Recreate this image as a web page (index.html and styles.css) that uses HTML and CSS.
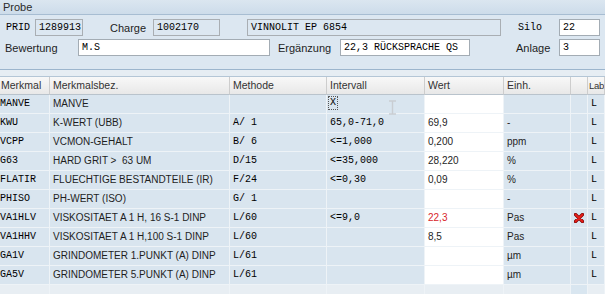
FILE: index.html
```html
<!DOCTYPE html>
<html lang="de">
<head>
    <meta charset="UTF-8">
    <title>Probe</title>
    <link rel="stylesheet" href="styles.css">
</head>
<body>
    <div class="titlebar">Probe</div>

    <div class="panel">
        <div class="form-row row-1">
            <span class="lbl mono lbl-prid">PRID</span>
            <span class="field ro mono f-prid">1289913</span>
            <span class="lbl lbl-charge">Charge</span>
            <span class="field ro mono f-charge">1002170</span>
            <span class="field ro mono f-text">VINNOLIT EP 6854</span>
            <span class="lbl mono lbl-silo">Silo</span>
            <span class="field mono f-small">22</span>
        </div>
        <div class="form-row row-2">
            <span class="lbl lbl-bew">Bewertung</span>
            <span class="field mono f-bew">M.S</span>
            <span class="lbl lbl-erg">Ergänzung</span>
            <span class="field mono f-erg">22,3 RÜCKSPRACHE QS</span>
            <span class="lbl lbl-anl">Anlage</span>
            <span class="field mono f-small">3</span>
        </div>
    </div>

    <div class="grid">
        <div class="row head">
            <div class="cell">Merkmal</div>
            <div class="cell">Merkmalsbez.</div>
            <div class="cell">Methode</div>
            <div class="cell">Intervall</div>
            <div class="cell">Wert</div>
            <div class="cell">Einh.</div>
            <div class="cell"></div>
            <div class="cell lab">Lab</div>
        </div>
        <div class="row">
            <div class="cell mono">MANVE</div>
            <div class="cell">MANVE</div>
            <div class="cell mono"></div>
            <div class="cell mono"><span class="check">X</span></div>
            <div class="cell val"></div>
            <div class="cell"></div>
            <div class="cell"></div>
            <div class="cell mono">L</div>
        </div>
        <div class="row">
            <div class="cell mono">KWU</div>
            <div class="cell">K-WERT (UBB)</div>
            <div class="cell mono">A/ 1</div>
            <div class="cell mono">65,0-71,0</div>
            <div class="cell val">69,9</div>
            <div class="cell">-</div>
            <div class="cell"></div>
            <div class="cell mono">L</div>
        </div>
        <div class="row">
            <div class="cell mono">VCPP</div>
            <div class="cell">VCMON-GEHALT</div>
            <div class="cell mono">B/ 6</div>
            <div class="cell mono">&lt;=1,000</div>
            <div class="cell val">0,200</div>
            <div class="cell">ppm</div>
            <div class="cell"></div>
            <div class="cell mono">L</div>
        </div>
        <div class="row">
            <div class="cell mono">G63</div>
            <div class="cell">HARD GRIT &gt;&nbsp; 63 UM</div>
            <div class="cell mono">D/15</div>
            <div class="cell mono">&lt;=35,000</div>
            <div class="cell val">28,220</div>
            <div class="cell">%</div>
            <div class="cell"></div>
            <div class="cell mono">L</div>
        </div>
        <div class="row">
            <div class="cell mono">FLATIR</div>
            <div class="cell">FLUECHTIGE BESTANDTEILE (IR)</div>
            <div class="cell mono">F/24</div>
            <div class="cell mono">&lt;=0,30</div>
            <div class="cell val">0,09</div>
            <div class="cell">%</div>
            <div class="cell"></div>
            <div class="cell mono">L</div>
        </div>
        <div class="row">
            <div class="cell mono">PHISO</div>
            <div class="cell">PH-WERT (ISO)</div>
            <div class="cell mono">G/ 1</div>
            <div class="cell mono"></div>
            <div class="cell val"></div>
            <div class="cell">-</div>
            <div class="cell"></div>
            <div class="cell mono">L</div>
        </div>
        <div class="row">
            <div class="cell mono">VA1HLV</div>
            <div class="cell">VISKOSITAET A 1 H, 16 S-1 DINP</div>
            <div class="cell mono">L/60</div>
            <div class="cell mono">&lt;=9,0</div>
            <div class="cell val bad">22,3</div>
            <div class="cell">Pas</div>
            <div class="cell icon">
                <svg width="10" height="10" viewBox="0 0 10 10">
                    <path d="M1.5 1.5 L8.5 8.5 M8.5 1.5 L1.5 8.5" stroke="#7a0000" stroke-width="3.2" stroke-linecap="round"/>
                    <path d="M1.5 1.5 L8.5 8.5 M8.5 1.5 L1.5 8.5" stroke="#e8201a" stroke-width="1.8" stroke-linecap="round"/>
                </svg>
            </div>
            <div class="cell mono">L</div>
        </div>
        <div class="row">
            <div class="cell mono">VA1HHV</div>
            <div class="cell">VISKOSITAET A 1 H,100 S-1 DINP</div>
            <div class="cell mono">L/60</div>
            <div class="cell mono"></div>
            <div class="cell val">8,5</div>
            <div class="cell">Pas</div>
            <div class="cell"></div>
            <div class="cell mono">L</div>
        </div>
        <div class="row">
            <div class="cell mono">GA1V</div>
            <div class="cell">GRINDOMETER 1.PUNKT (A) DINP</div>
            <div class="cell mono">L/61</div>
            <div class="cell mono"></div>
            <div class="cell val"></div>
            <div class="cell">µm</div>
            <div class="cell"></div>
            <div class="cell mono">L</div>
        </div>
        <div class="row">
            <div class="cell mono">GA5V</div>
            <div class="cell">GRINDOMETER 5.PUNKT (A) DINP</div>
            <div class="cell mono">L/61</div>
            <div class="cell mono"></div>
            <div class="cell val"></div>
            <div class="cell">µm</div>
            <div class="cell"></div>
            <div class="cell mono">L</div>
        </div>
        <div class="row empty">
            <div class="cell"></div>
            <div class="cell"></div>
            <div class="cell"></div>
            <div class="cell"></div>
            <div class="cell"></div>
            <div class="cell"></div>
            <div class="cell side"></div>
            <div class="cell"></div>
        </div>

        <!-- Mauszeiger (I-Beam) über der Tabelle -->
        <svg class="ibeam" width="9" height="15" viewBox="0 0 9 15">
            <path d="M1 1 H8 M4.5 1 V14 M1 14 H8" stroke="#c9cdd2" stroke-width="1.4" fill="none"/>
        </svg>
    </div>
</body>
</html>
```

FILE: styles.css
```css
body {
    margin: 0;
    padding: 0;
    width: 605px;
    height: 294px;
    overflow: hidden;
    background-color: #e6edf3;
    font-family: 'Liberation Sans', Arial, sans-serif;
    font-size: 11px;
    color: #1e1e1e;
}

.mono {
    font-family: 'Liberation Mono', 'Courier New', monospace;
    font-size: 10px;
    color: #000;
}

/* Titelleiste */

.titlebar {
    height: 14px;
    line-height: 14px;
    padding-left: 3px;
    background: linear-gradient(#dbe6f0, #cddcea);
    border-bottom: 1px solid #a7bdd2;
    color: #2a2a2a;
}

/* Kopfbereich mit Feldern */

.panel {
    background-color: #dce7f1;
    padding-top: 4px;
    height: 50px;
    border-bottom: 1px solid #9cb5cd;
}

.form-row {
    display: flex;
    align-items: center;
    height: 17px;
    margin-bottom: 3px;
}

.row-1 {
    padding-left: 6px;
}

.row-2 {
    padding-left: 5px;
}

.lbl {
    display: block;
}

.field {
    box-sizing: border-box;
    display: block;
    height: 17px;
    line-height: 15px;
    padding-left: 3px;
    border: 1px solid #a3acb4;
    background-color: #fff;
    white-space: nowrap;
    overflow: hidden;
}

.field.ro {
    background-color: #dce7f1;
    border-color: #a9aeb3;
}

.lbl-prid { width: 29px; }
.f-prid { width: 48px; }
.lbl-charge { width: 43px; margin-left: 27px; }
.f-charge { width: 67px; }
.f-text { width: 254px; margin-left: 27px; }
.lbl-silo { width: 41px; margin-left: 17px; }
.f-small { width: 41px; }

.lbl-bew { width: 73px; }
.f-bew { width: 192px; }
.lbl-erg { width: 62px; margin-left: 8px; }
.f-erg { width: 130px; }
.lbl-anl { width: 43px; margin-left: 46px; }

/* Tabelle */

.grid {
    position: relative;
    margin-top: 6px;
    border-top: 1px solid #b4c6d6;
}

.row {
    display: grid;
    grid-template-columns: 50px 180px 97px 98px 79px 67px 17px 17px;
    height: 19px;
    background-color: #d9e5ef;
}

.cell {
    box-sizing: border-box;
    height: 19px;
    line-height: 18px;
    padding-left: 3px;
    border-right: 1px solid #eef3f7;
    border-bottom: 1px solid #eef3f7;
    font-size: 10px;
    white-space: nowrap;
    overflow: hidden;
}

.row .cell:first-child {
    padding-left: 0;
}

.row.head {
    height: 18px;
    background: linear-gradient(#f8f8f8, #e7e7e7);
}

.row.head .cell {
    height: 18px;
    line-height: 17px;
    font-size: 10.5px;
    color: #333;
    border-right-color: #cdcdcd;
    border-bottom-color: #b9c3cc;
}

.row.head .cell:first-child {
    padding-left: 1px;
}

.row.head .cell.lab {
    padding-left: 1px;
    font-size: 9.5px;
    letter-spacing: -0.3px;
}

.cell.val {
    background-color: #fff;
}

.cell.bad {
    color: #d8252a;
}

.cell.icon {
    padding-left: 0;
    display: flex;
    align-items: center;
    justify-content: center;
}

.check {
    display: inline-block;
    box-sizing: border-box;
    height: 14px;
    line-height: 12px;
    padding: 0 1px;
    margin-left: -2px;
    border: 1px dotted #555;
    vertical-align: middle;
}

.row.empty {
    background-color: #e8eef3;
}

.row.empty .cell.side {
    background-color: #d9e6f0;
}

.ibeam {
    position: absolute;
    left: 388px;
    top: 23px;
}
```
